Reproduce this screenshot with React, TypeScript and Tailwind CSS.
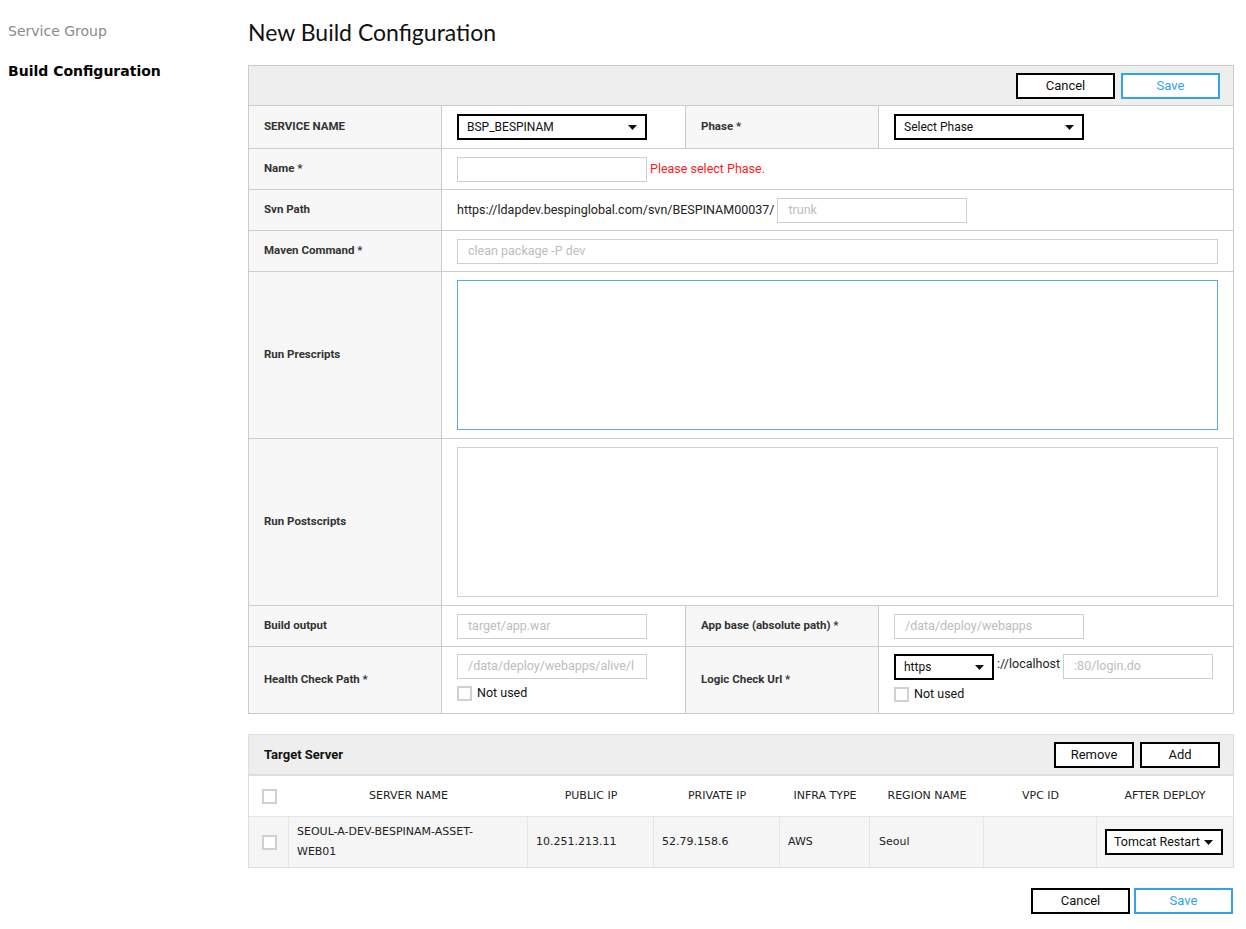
import React from "react";

const verdana = { fontFamily: '"DejaVu Sans", Verdana, sans-serif' };
const ubuntu = { fontFamily: 'Roboto, "Noto Sans", sans-serif' };

function Caret() {
  return (
    <svg width="9" height="5" viewBox="0 0 9 5" className="shrink-0">
      <path d="M0 0 L9 0 L4.5 5 Z" fill="#111" />
    </svg>
  );
}

function Select({ label, w, h = "h-[26px]" }: { label: string; w: string; h?: string }) {
  return (
    <div
      className={`flex items-center justify-between border-2 border-black bg-white pl-[8px] pr-[8px] text-[12px] text-[#111] ${w} ${h}`}
      style={ubuntu}
    >
      <span>{label}</span>
      <Caret />
    </div>
  );
}

function Input({ w, placeholder = "" }: { w: string; placeholder?: string }) {
  return (
    <div
      className={`flex h-[25px] items-center border border-[#cfcfcf] bg-white px-[10px] text-[12.5px] text-[#bdbdbd] overflow-hidden whitespace-nowrap ${w}`}
      style={ubuntu}
    >
      {placeholder}
    </div>
  );
}

function Checkbox() {
  return <div className="h-[15px] w-[15px] shrink-0 border-2 border-[#d0d0d0] bg-white" />;
}

function Btn({ children, blue = false, w = "w-[99px]" }: { children: React.ReactNode; blue?: boolean; w?: string }) {
  return (
    <div
      className={`flex h-[26px] items-center justify-center border-2 bg-white text-[13px] ${w} ${
        blue ? "border-[#2ea6e6] text-[#2ea6e6]" : "border-black text-[#111]"
      }`}
      style={ubuntu}
    >
      {children}
    </div>
  );
}

function Label({ children, w = "w-[193px]" }: { children: React.ReactNode; w?: string }) {
  return (
    <div
      className={`flex shrink-0 items-center border-r border-[#cccccc] bg-[#f7f7f7] pl-[15px] text-[11.5px] font-bold text-[#333] ${w}`}
      style={ubuntu}
    >
      {children}
    </div>
  );
}

function Value({ children, w = "" }: { children?: React.ReactNode; w?: string }) {
  return <div className={`flex items-center pl-[15px] ${w}`}>{children}</div>;
}

export default function App() {
  return (
    <div className="flex min-h-[929px] w-[1246px] bg-white">
      {/* Sidebar */}
      <div className="w-[248px] shrink-0 pl-[8px] pt-[21px]" style={verdana}>
        <div className="text-[14px] text-[#8a8a8a] leading-[20px]">Service Group</div>
        <div className="mt-[20px] text-[14px] font-bold text-black leading-[20px]">Build Configuration</div>
      </div>

      {/* Main */}
      <div className="w-[986px] shrink-0">
        <h1
          className="pt-[17px] text-[23px] leading-[30px] text-[#111]"
          style={{ fontFamily: 'Lato, "Open Sans", sans-serif' }}
        >
          New Build Configuration
        </h1>

        {/* Form panel */}
        <div className="mt-[18px] border border-[#cccccc]">
          <div className="flex h-[40px] items-center justify-end gap-[6px] border-b border-[#cccccc] bg-[#eeeeee] pr-[13px]">
            <Btn>Cancel</Btn>
            <Btn blue>Save</Btn>
          </div>

          {/* Service name / Phase */}
          <div className="flex h-[43px] border-b border-[#cccccc]">
            <Label>SERVICE NAME</Label>
            <Value w="w-[244px] border-r border-[#cccccc]">
              <Select label="BSP_BESPINAM" w="w-[190px]" />
            </Value>
            <Label>Phase *</Label>
            <Value w="flex-1">
              <Select label="Select Phase" w="w-[190px]" />
            </Value>
          </div>

          {/* Name */}
          <div className="flex h-[41px] border-b border-[#cccccc]">
            <Label>Name *</Label>
            <Value w="flex-1">
              <Input w="w-[190px]" />
              <span className="ml-[3px] text-[12.5px] text-[#ff1a1a]" style={ubuntu}>
                Please select Phase.
              </span>
            </Value>
          </div>

          {/* Svn path */}
          <div className="flex h-[41px] border-b border-[#cccccc]">
            <Label>Svn Path</Label>
            <Value w="flex-1">
              <span className="text-[12.5px] text-[#222]" style={ubuntu}>
                https://ldapdev.bespinglobal.com/svn/BESPINAM00037/
              </span>
              <div className="ml-[3px]">
                <Input w="w-[190px]" placeholder="trunk" />
              </div>
            </Value>
          </div>

          {/* Maven */}
          <div className="flex h-[41px] border-b border-[#cccccc]">
            <Label>Maven Command *</Label>
            <Value w="flex-1 pr-[15px]">
              <Input w="w-full" placeholder="clean package -P dev" />
            </Value>
          </div>

          {/* Prescripts */}
          <div className="flex h-[167px] border-b border-[#cccccc]">
            <Label>Run Prescripts</Label>
            <Value w="flex-1 pr-[15px]">
              <div className="h-[150px] w-full border border-[#5eaad6] bg-white" />
            </Value>
          </div>

          {/* Postscripts */}
          <div className="flex h-[167px] border-b border-[#cccccc]">
            <Label>Run Postscripts</Label>
            <Value w="flex-1 pr-[15px]">
              <div className="h-[150px] w-full border border-[#cfcfcf] bg-white" />
            </Value>
          </div>

          {/* Build output / app base */}
          <div className="flex h-[41px] border-b border-[#cccccc]">
            <Label>Build output</Label>
            <Value w="w-[244px] border-r border-[#cccccc]">
              <Input w="w-[190px]" placeholder="target/app.war" />
            </Value>
            <Label>App base (absolute path) *</Label>
            <Value w="flex-1">
              <Input w="w-[190px]" placeholder="/data/deploy/webapps" />
            </Value>
          </div>

          {/* Health / Logic */}
          <div className="flex h-[66px]">
            <Label>Health Check Path *</Label>
            <Value w="w-[244px] border-r border-[#cccccc]">
              <div className="flex flex-col gap-[5px] pb-[3px]">
                <Input w="w-[190px]" placeholder="/data/deploy/webapps/alive/l" />
                <div className="flex items-center gap-[5px]">
                  <Checkbox />
                  <span className="text-[12.5px] text-[#111]" style={ubuntu}>Not used</span>
                </div>
              </div>
            </Value>
            <Label>Logic Check Url *</Label>
            <Value w="flex-1">
              <div className="flex flex-col gap-[5px] pb-[2px]">
                <div className="flex items-start">
                  <Select label="https" w="w-[100px]" />
                  <span className="ml-[3px] mt-[1px] text-[12.5px] text-[#222]" style={ubuntu}>://localhost</span>
                  <div className="ml-[3px]">
                    <Input w="w-[150px]" placeholder=":80/login.do" />
                  </div>
                </div>
                <div className="flex items-center gap-[5px]">
                  <Checkbox />
                  <span className="text-[12.5px] text-[#111]" style={ubuntu}>Not used</span>
                </div>
              </div>
            </Value>
          </div>
        </div>

        {/* Target server panel */}
        <div className="mt-[20px] border border-[#dddddd]" style={verdana}>
          <div className="flex h-[41px] items-center justify-between border-b-2 border-[#dddddd] bg-[#eeeeee] pl-[15px] pr-[13px]">
            <span className="text-[13px] font-bold text-[#111]" style={ubuntu}>Target Server</span>
            <div className="flex gap-[6px]">
              <Btn w="w-[80px]">Remove</Btn>
              <Btn w="w-[80px]">Add</Btn>
            </div>
          </div>
          <div className="flex h-[40px] items-center text-[11px] text-[#222]">
            <div className="flex w-[40px] justify-center pl-[1px]">
              <Checkbox />
            </div>
            <div className="w-[239px] text-center">SERVER NAME</div>
            <div className="w-[126px] text-center">PUBLIC IP</div>
            <div className="w-[126px] text-center">PRIVATE IP</div>
            <div className="w-[90px] text-center">INFRA TYPE</div>
            <div className="w-[114px] text-center">REGION NAME</div>
            <div className="w-[113px] text-center">VPC ID</div>
            <div className="flex-1 text-center">AFTER DEPLOY</div>
          </div>
          <div className="flex h-[51px] border-t border-[#e5e5e5] bg-[#f5f5f5] text-[11px] text-[#222]">
            <div className="flex w-[40px] items-center justify-center border-r border-[#e5e5e5] pl-[1px]">
              <Checkbox />
            </div>
            <div className="flex w-[239px] items-center border-r border-[#e5e5e5] px-[8px] leading-[20px]">
              <span>
                SEOUL-A-DEV-BESPINAM-ASSET-
                <br />
                WEB01
              </span>
            </div>
            <div className="flex w-[126px] items-center border-r border-[#e5e5e5] pl-[8px]">10.251.213.11</div>
            <div className="flex w-[126px] items-center border-r border-[#e5e5e5] pl-[8px]">52.79.158.6</div>
            <div className="flex w-[90px] items-center border-r border-[#e5e5e5] pl-[8px]">AWS</div>
            <div className="flex w-[114px] items-center border-r border-[#e5e5e5] pl-[9px]">Seoul</div>
            <div className="flex w-[113px] items-center border-r border-[#e5e5e5]" />
            <div className="flex flex-1 items-center pl-[8px]">
              <div
                className="flex h-[26px] w-[118px] items-center justify-between border-2 border-black bg-white pl-[7px] pr-[8px] text-[12.5px] text-[#111]"
                style={ubuntu}
              >
                <span>Tomcat Restart</span>
                <Caret />
              </div>
            </div>
          </div>
        </div>

        <div className="mt-[20px] flex justify-end gap-[4px] pr-[1px]">
          <Btn>Cancel</Btn>
          <Btn blue>Save</Btn>
        </div>
      </div>
    </div>
  );
}
